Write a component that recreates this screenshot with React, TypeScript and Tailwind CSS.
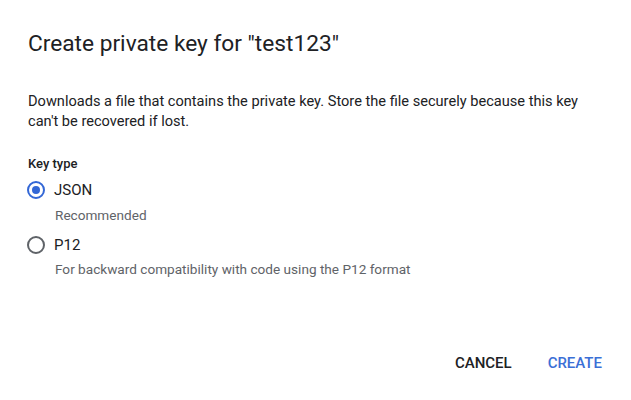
import React from "react";

function Radio({ checked }: { checked: boolean }) {
  return (
    <span
      className={
        "-ml-[1px] flex h-[18px] w-[18px] shrink-0 items-center justify-center rounded-full border-2 " +
        (checked ? "border-[#3367d6]" : "border-[#5f6368]")
      }
    >
      {checked && <span className="h-[8px] w-[8px] rounded-full bg-[#3367d6]" />}
    </span>
  );
}

export default function App() {
  return (
    <div
      className="flex h-[400px] w-[631px] flex-col bg-white text-[#202124]"
      style={{ fontFamily: "Roboto, 'Liberation Sans', sans-serif" }}
    >
      <div className="px-[28px] pt-[30px]">
        <h1 className="text-[22.7px] leading-[28px] font-normal">Create private key for "test123"</h1>
        <p className="mt-[33px] text-[14.6px] leading-[20px]">
          Downloads a file that contains the private key. Store the file securely because this key
          can't be recovered if lost.
        </p>
        <div className="mt-[25px] text-[13px] leading-[16px] font-medium">Key type</div>
        <div className="mt-[8px] flex items-center gap-[9px]">
          <Radio checked />
          <span className="text-[15px] leading-[20px]">JSON</span>
        </div>
        <div className="mt-[5px] pl-[27px] text-[13.6px] leading-[20px] text-[#5f6368]">Recommended</div>
        <div className="mt-[10px] flex items-center gap-[9px]">
          <Radio checked={false} />
          <span className="text-[15px] leading-[20px]">P12</span>
        </div>
        <div className="mt-[4px] pl-[27px] text-[13.6px] leading-[20px] text-[#5f6368]">
          For backward compatibility with code using the P12 format
        </div>
      </div>
      <div className="mt-auto flex items-center justify-end gap-[36px] pb-[27px] pr-[29px]">
        <button className="text-[15px] leading-[20px] font-medium text-[#202124]">CANCEL</button>
        <button className="text-[15px] leading-[20px] font-medium text-[#3b6fd6]">CREATE</button>
      </div>
    </div>
  );
}
